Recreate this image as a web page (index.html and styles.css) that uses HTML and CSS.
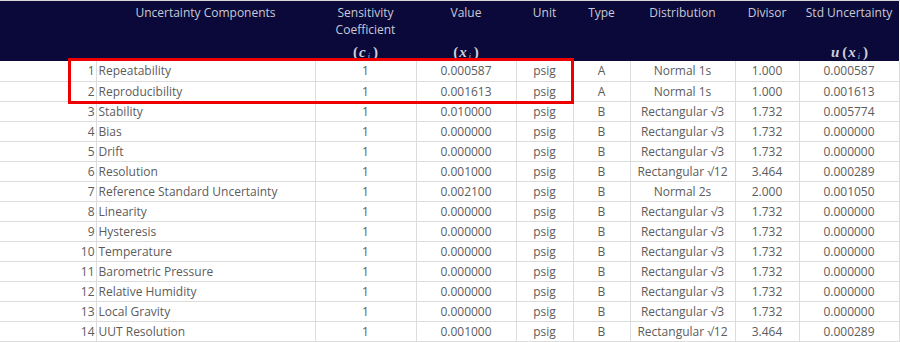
FILE: index.html
```html
<!DOCTYPE html>
<html>
<head>
<meta charset="utf-8">
<link rel="stylesheet" href="styles.css">
</head>
<body>
<div class="wrap">
<table class="ut">
  <colgroup>
    <col class="c-num"><col class="c-name"><col class="c-sens"><col class="c-val"><col class="c-unit"><col class="c-type"><col class="c-dist"><col class="c-div"><col class="c-std">
  </colgroup>
  <thead>
    <tr>
      <th><div class="hd"></div></th>
      <th><div class="hd"><span>Uncertainty Components</span></div></th>
      <th><div class="hd"><span>Sensitivity<br>Coefficient</span><span class="m">(<i>c</i><sub>i</sub>)</span></div></th>
      <th><div class="hd"><span>Value</span><span class="m">(<i>x</i><sub>i</sub>)</span></div></th>
      <th><div class="hd"><span>Unit</span></div></th>
      <th><div class="hd"><span>Type</span></div></th>
      <th><div class="hd"><span>Distribution</span></div></th>
      <th><div class="hd"><span>Divisor</span></div></th>
      <th><div class="hd"><span>Std Uncertainty</span><span class="m"><i class="u">u</i>(<i>x</i><sub>i</sub>)</span></div></th>
    </tr>
  </thead>
  <tbody>
    <tr><td class="n">1</td><td class="l">Repeatability</td><td>1</td><td>0.000587</td><td>psig</td><td>A</td><td>Normal 1s</td><td>1.000</td><td>0.000587</td></tr>
    <tr><td class="n">2</td><td class="l">Reproducibility</td><td>1</td><td>0.001613</td><td>psig</td><td>A</td><td>Normal 1s</td><td>1.000</td><td>0.001613</td></tr>
    <tr><td class="n">3</td><td class="l">Stability</td><td>1</td><td>0.010000</td><td>psig</td><td>B</td><td>Rectangular √3</td><td>1.732</td><td>0.005774</td></tr>
    <tr><td class="n">4</td><td class="l">Bias</td><td>1</td><td>0.000000</td><td>psig</td><td>B</td><td>Rectangular √3</td><td>1.732</td><td>0.000000</td></tr>
    <tr><td class="n">5</td><td class="l">Drift</td><td>1</td><td>0.000000</td><td>psig</td><td>B</td><td>Rectangular √3</td><td>1.732</td><td>0.000000</td></tr>
    <tr><td class="n">6</td><td class="l">Resolution</td><td>1</td><td>0.001000</td><td>psig</td><td>B</td><td>Rectangular √12</td><td>3.464</td><td>0.000289</td></tr>
    <tr><td class="n">7</td><td class="l">Reference Standard Uncertainty</td><td>1</td><td>0.002100</td><td>psig</td><td>B</td><td>Normal 2s</td><td>2.000</td><td>0.001050</td></tr>
    <tr><td class="n">8</td><td class="l">Linearity</td><td>1</td><td>0.000000</td><td>psig</td><td>B</td><td>Rectangular √3</td><td>1.732</td><td>0.000000</td></tr>
    <tr><td class="n">9</td><td class="l">Hysteresis</td><td>1</td><td>0.000000</td><td>psig</td><td>B</td><td>Rectangular √3</td><td>1.732</td><td>0.000000</td></tr>
    <tr><td class="n">10</td><td class="l">Temperature</td><td>1</td><td>0.000000</td><td>psig</td><td>B</td><td>Rectangular √3</td><td>1.732</td><td>0.000000</td></tr>
    <tr><td class="n">11</td><td class="l">Barometric Pressure</td><td>1</td><td>0.000000</td><td>psig</td><td>B</td><td>Rectangular √3</td><td>1.732</td><td>0.000000</td></tr>
    <tr><td class="n">12</td><td class="l">Relative Humidity</td><td>1</td><td>0.000000</td><td>psig</td><td>B</td><td>Rectangular √3</td><td>1.732</td><td>0.000000</td></tr>
    <tr><td class="n">13</td><td class="l">Local Gravity</td><td>1</td><td>0.000000</td><td>psig</td><td>B</td><td>Rectangular √3</td><td>1.732</td><td>0.000000</td></tr>
    <tr><td class="n">14</td><td class="l">UUT Resolution</td><td>1</td><td>0.001000</td><td>psig</td><td>B</td><td>Rectangular √12</td><td>3.464</td><td>0.000289</td></tr>
  </tbody>
</table>
<div class="highlight"></div>
</div>
</body>
</html>
```
FILE: styles.css
```css
html, body {
  margin: 0;
  padding: 0;
  background: #ffffff;
}
.wrap {
  position: relative;
  width: 900px;
  height: 342px;
  overflow: hidden;
  border-top: 1px solid #d8d8d8;
  box-sizing: border-box;
}
.ut {
  border-collapse: collapse;
  table-layout: fixed;
  width: 899px;
  font-family: "Open Sans", "Noto Sans", sans-serif;
  font-size: 12px;
  color: #5c5c5c;
}
.c-num { width: 96px; }
.c-name { width: 219px; }
.c-sens { width: 101px; }
.c-val { width: 100px; }
.c-unit { width: 57px; }
.c-type { width: 57px; }
.c-dist { width: 105px; }
.c-div { width: 64px; }
.c-std { width: 100px; }

.ut th {
  background: #0a0939;
  color: #c9c9d6;
  font-weight: normal;
  padding: 0;
  vertical-align: top;
}
.hd {
  height: 60px;
  display: flex;
  flex-direction: column;
  justify-content: space-between;
  align-items: center;
  line-height: 17px;
  padding-top: 3px;
  box-sizing: border-box;
}
.hd .m {
  font-family: "Liberation Serif", "DejaVu Serif", serif;
  font-size: 15px;
  font-weight: bold;
  color: #d0d0dc;
  line-height: 15px;
  padding-bottom: 1px;
}
.hd .m i { margin-left: 1px; }
.hd .m i.u { margin-right: 3px; }
.hd .m sub {
  font-size: 8px;
  font-style: italic;
  font-weight: normal;
  margin: 0 3px 0 2px;
  vertical-align: -2px;
  line-height: 0;
}
.ut tbody tr { height: 20px; }
.ut td {
  padding: 0;
  text-align: center;
  border: 1px solid #dcdcdc;
  line-height: 19px;
  white-space: nowrap;
  overflow: hidden;
}
.ut tbody tr:first-child td { border-top: none; }
.ut td.n {
  text-align: right;
  padding-right: 1px;
  border-left: none;
}
.ut td.l {
  text-align: left;
  padding-left: 2px;
}
.highlight {
  position: absolute;
  left: 68px;
  top: 57px;
  width: 506px;
  height: 46px;
  border: 3px solid #ee0000;
  box-sizing: border-box;
}
```
